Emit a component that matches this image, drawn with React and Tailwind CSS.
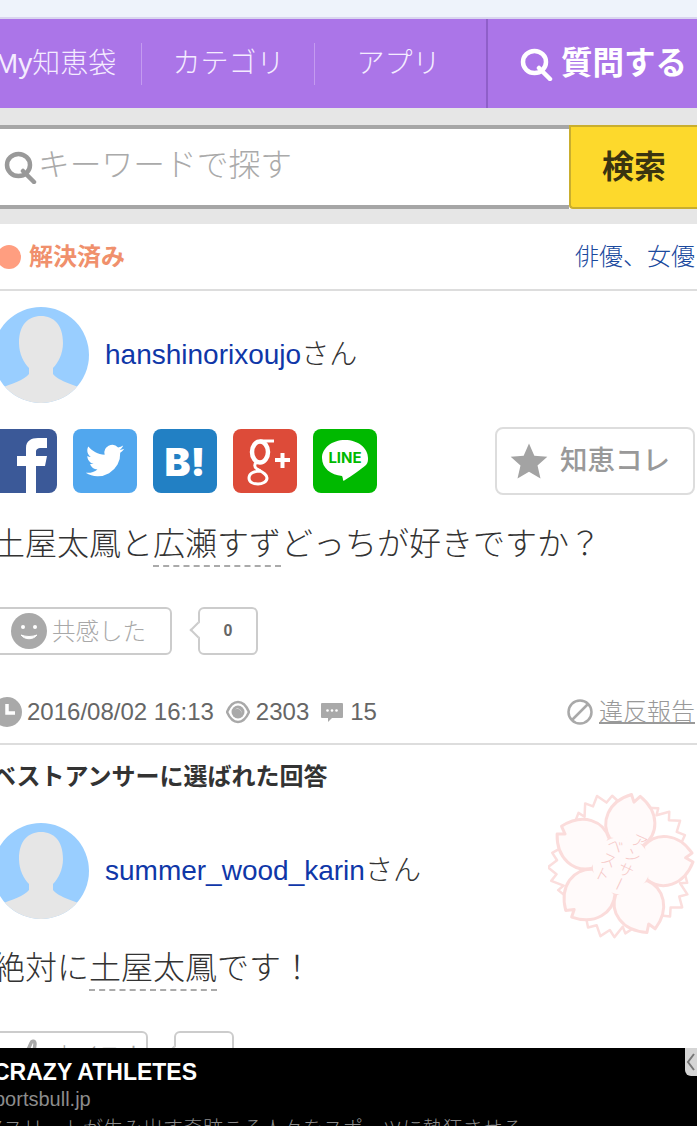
const sans = "font-['Liberation_Sans','Noto_Sans_CJK_JP',sans-serif]";

function SearchGlyph({ className }) {
  return (
    <svg viewBox="0 0 34 34" className={className} fill="none" stroke="currentColor">
      <ellipse cx="14.500" cy="15" rx="11.500" ry="11" strokeWidth="4.500" />
      <path d="M19 21l11 11" strokeWidth="4.500" strokeLinecap="round" />
    </svg>
  );
}

function Avatar() {
  return (
    <svg viewBox="0 0 96 96" className="w-24 h-24 shrink-0 rounded-full">
      <rect width="96" height="96" fill="#99ceff" />
      <path d="M48 9c-13 0-22 9-22 27 0 11 5 20 10 25v6c-5 7-24 12-36 17v12h96V84c-12-5-31-10-36-17v-6c5-5 10-14 10-25 0-18-9-27-22-27z" fill="#e6e6e6" />
    </svg>
  );
}

function Facebook() {
  return (
    <div className="w-16 h-16 rounded-lg bg-[#3b5998] overflow-hidden">
      <svg viewBox="0 0 64 64" className="w-16 h-16">
        <path d="M33 64V37H24V27H33V19C33 12 38 9 45 9H54V19H48C45 19 43 20 43 23V27H54L52 37H43V64Z" fill="#fff" />
      </svg>
    </div>
  );
}

function Twitter() {
  return (
    <div className="w-16 h-16 rounded-lg bg-[#51a7ee] flex items-center justify-center">
      <svg viewBox="0 0 24 24" className="w-[42px] h-[42px]" fill="#fff">
        <path d="M23 5c-.8.4-1.700.6-2.600.7.900-.6 1.600-1.400 2-2.500-.9.5-1.900.9-2.900 1.100a4.500 4.500 0 0 0-7.700 4.100C8 8.200 4.700 6.400 2.500 3.700c-1.200 2-.6 4.600 1.400 6-.7 0-1.400-.2-2-.6 0 2.200 1.500 4.100 3.600 4.500-.7.200-1.400.2-2 .1.600 1.800 2.200 3.100 4.200 3.100A9 9 0 0 1 1 18.700 12.800 12.800 0 0 0 20.700 7.300c.9-.6 1.700-1.400 2.300-2.300z" />
      </svg>
    </div>
  );
}

function Hatena() {
  return (
    <div className="w-16 h-16 rounded-lg bg-[#2280c4] flex items-center justify-center text-white font-black text-[39px] leading-none font-['Inter',sans-serif]">
      B!
    </div>
  );
}

function GooglePlus() {
  return (
    <div className="w-16 h-16 rounded-lg bg-[#dd4b39]">
      <svg viewBox="0 0 64 64" className="w-16 h-16" fill="none" stroke="#fff">
        <ellipse cx="27" cy="23" rx="8" ry="10.500" strokeWidth="4.500" />
        <path d="M27 12h14" strokeWidth="3" />
        <path d="M24 33c-3 2-3 5 0 7 5 3 10 5 10 9 0 4-5 6-9 6-5 0-9-2-9-6 0-5 6-7 12-7" strokeWidth="3" />
        <path d="M42 31h15M49.500 24v15" strokeWidth="4" />
      </svg>
    </div>
  );
}

function Line() {
  return (
    <div className="relative w-16 h-16 rounded-lg bg-[#00b900]">
      <svg viewBox="0 0 64 64" className="w-16 h-16">
        <path d="M32 11c-13 0-23 8-23 18 0 10 9 17 20 18 0 0 1 2 1 4 0 1 1 1 2 0 7-4 16-11 21-15 2-2 2-5 2-7 0-10-10-18-23-18z" fill="#fff" />
      </svg>
      <span className="absolute inset-x-0 top-[20px] text-center text-[#00b900] font-['Inter',sans-serif] font-bold text-[15px] leading-[18px]">LINE</span>
    </div>
  );
}

function Stamp() {
  const front = "M-17 -24C-30 -38 -27 -60 -5 -72L-1 -65L4 -72C27 -60 30 -38 17 -24Z";
  const back = "M-16 -30L-26 -58L-18 -66L-14 -60L-8 -72L-2 -66L6 -74L12 -64L20 -68L26 -54L16 -30Z";
  const angles = [0, 72, 144, 216, 288];
  return (
    <svg viewBox="-74 -74 148 148" className="absolute left-[548px] top-[792px] w-[147px] h-[147px]">
      <g transform="rotate(12)" strokeLinejoin="round">
        <g stroke="#fbdedd" strokeWidth="2.500" fill="#fff">
          {angles.map((a) => <path key={a} d={back} transform={`rotate(${a - 36})`} />)}
        </g>
        <g stroke="#fbdcdb" strokeWidth="3" fill="#fffafa">
          {angles.map((a) => <path key={a} d={front} transform={`rotate(${a})`} />)}
        </g>
        <circle r="29" fill="#fffafa" />
      </g>
      <g fill="#f6c8c7" fontSize="16" transform="rotate(25)" fontFamily="'Noto Sans CJK JP', sans-serif" fontWeight="300">
        <text x="6" y="-38" writingMode="vertical-rl">アンサー</text>
        <text x="-14" y="-24" writingMode="vertical-rl">ベスト</text>
      </g>
    </svg>
  );
}

function Underlined({ children }) {
  return <span className="border-b-2 border-dashed border-[#aaa] pb-[3px]">{children}</span>;
}

function User({ name, className }) {
  return (
    <div className={`flex items-center gap-4 ${className}`}>
      <Avatar />
      <div className="text-[28px] leading-8 font-light text-[#333]">
        <span className="text-[#0f37a8] font-normal">{name}</span>さん
      </div>
    </div>
  );
}

function ActionRow({ icon, label, width, className }) {
  return (
    <div className={`flex items-center ${className}`}>
      <div style={{ width }} className="h-12 border-2 border-[#ccc] rounded-md flex items-center pl-[26px] text-[#a8a8a8] text-[23.5px] font-light">
        {icon}
        <span className="ml-[5px] pt-[3px]">{label}</span>
      </div>
      <div className="relative ml-[26px] w-[60px] h-12 border-2 border-[#ccc] rounded-md bg-white flex items-center justify-center text-[#666] text-[16px] font-bold">
        0
        <span className="absolute left-[-8px] top-[15px] w-3 h-3 rotate-45 bg-white border-l-2 border-b-2 border-[#ccc]" />
      </div>
    </div>
  );
}

function Smile() {
  return (
    <svg viewBox="0 0 36 36" className="w-9 h-9 shrink-0">
      <circle cx="18" cy="18" r="18" fill="#a9a9a9" />
      <circle cx="12" cy="14" r="2" fill="#fff" />
      <circle cx="24" cy="14" r="2" fill="#fff" />
      <path d="M10 22c4 5 12 5 16 0-5 2-11 2-16 0z" fill="#fff" stroke="#fff" />
    </svg>
  );
}

function Thumb() {
  return (
    <svg viewBox="0 0 36 36" className="w-9 h-9 shrink-0" fill="none" stroke="#a9a9a9" strokeWidth="3.500" strokeLinecap="round">
      <path d="M6 26C14 18 18 12 20 6 21 3 24 4 24 7c0 4-1 8-3 12" />
    </svg>
  );
}

export default function App() {
  return (
    <div className={`relative w-[697px] h-[1126px] overflow-hidden bg-white ${sans}`}>
      <div className="h-[17px] bg-[#eef3fb]" />
      <div className="h-[2px] bg-[#d9d5ef]" />

      <nav className="h-[89px] bg-[#ab75e8] flex text-white -ml-[31px] w-[728px]">
        <div className="relative w-[173px] flex items-center justify-center text-[28px] font-light text-[#f4ecff]">
          My知恵袋
          <span className="absolute right-0 top-[24px] h-[42px] w-[1px] bg-[#c49bf0]" />
        </div>
        <div className="relative w-[173px] flex items-center justify-center text-[28px] font-light text-[#f4ecff]">
          カテゴリ
          <span className="absolute right-0 top-[24px] h-[42px] w-[1px] bg-[#c49bf0]" />
        </div>
        <div className="w-[171px] flex items-center justify-center pr-[4px] text-[28px] font-light text-[#f4ecff]">
          アプリ
        </div>
        <div className="flex-1 border-l-2 border-[#8f5fc9] flex items-center pl-[32px] gap-[7px] text-[31.5px] font-bold">
          <SearchGlyph className="w-[34px] h-[34px] text-white" />
          <span>質問する</span>
        </div>
      </nav>

      <div className="h-[17px] bg-[#e6e6e6]" />
      <div className="h-[84px] flex">
        <div className="flex-1 border-y-4 border-[#a6a6a6] bg-white flex items-center pl-[4px] text-[31.75px] font-light text-[#aaa]">
          <SearchGlyph className="w-[34px] h-[34px] text-[#999]" />
          <span className="-mt-[2px]">キーワードで探す</span>
        </div>
        <div className="w-[128px] bg-[#fdd92c] border-2 border-[#c9ae2e] border-r-0 rounded-bl-sm flex items-center justify-center text-[32px] font-bold text-[#3a3410]">
          検索
        </div>
      </div>
      <div className="h-[15px] bg-[#e6e6e6]" />

      <div className="h-[65px] flex items-center justify-between pr-[2px]">
        <div className="flex items-center -ml-[3px] gap-[8px] text-[#f0906c] text-[24px] font-bold">
          <span className="w-6 h-6 rounded-full bg-[#ff9e80]" />
          解決済み
        </div>
        <span className="text-[#1b4a9e] text-[24px] font-light">俳優、女優</span>
      </div>
      <div className="h-[2px] bg-[#ddd]" />

      <div className="-ml-[8px] w-[705px]">
        <User name="hanshinorixoujo" className="mt-[16px] pl-[1px]" />

        <div className="mt-[24px] h-[68px] flex items-center pl-[1px] pr-[2px]">
          <div className="flex gap-4">
            <Facebook />
            <Twitter />
            <Hatena />
            <GooglePlus />
            <Line />
          </div>
          <div className="ml-auto w-[200px] h-[68px] border-2 border-[#ddd] rounded-lg flex items-center pl-[12px] gap-[11px] text-[#999] text-[27.5px] font-medium">
            <svg viewBox="0 0 24 24" className="w-[40px] h-[40px]" fill="#a3a3a3">
              <path d="M12 1.500l3.200 7.300 7.800.7-5.900 5.200 1.800 7.800L12 18.400l-6.900 4.100 1.800-7.800L1 9.500l7.800-.7z" />
            </svg>
            知恵コレ
          </div>
        </div>

        <p className="mt-[25px] pl-[1px] text-[32px] leading-[48px] font-light text-[#333]">
          土屋太鳳と<Underlined>広瀬すず</Underlined>どっちが好きですか？
        </p>

        <ActionRow className="mt-[39px] -ml-[9px]" width="189px" icon={<Smile />} label="共感した" />

        <div className="mt-[41px] h-[32px] flex items-center text-[24px] text-[#666] font-light">
          <svg viewBox="0 0 30 30" className="w-[30px] h-[30px] mr-[5px]">
            <circle cx="15" cy="15" r="15" fill="#a9a9a9" />
            <path d="M15 7v9h8" stroke="#fff" strokeWidth="3.500" fill="none" />
          </svg>
          <span>2016/08/02 16:13</span>
          <svg viewBox="0 0 24 24" className="w-6 h-6 ml-[12px] mr-[6px]">
            <path d="M1 12C4 5 8 2 12 2s8 3 11 10c-3 7-7 10-11 10S4 19 1 12z" fill="none" stroke="#a9a9a9" strokeWidth="2.500" />
            <circle cx="12" cy="12" r="6.500" fill="#a9a9a9" />
            <path d="M9 9.500a4 4 0 0 1 6 5c1-2 0-5-3-5.500-1 0-2 0-3 .5z" fill="#fff" />
          </svg>
          <span>2303</span>
          <svg viewBox="0 0 24 24" className="w-6 h-6 ml-[11px] mr-[6px]">
            <path d="M2 3h20a1 1 0 0 1 1 1v13a1 1 0 0 1-1 1H12l-4 4v-4H2a1 1 0 0 1-1-1V4a1 1 0 0 1 1-1z" fill="#a9a9a9" />
            <circle cx="7.500" cy="10.500" r="1.300" fill="#fff" />
            <circle cx="12" cy="10.500" r="1.300" fill="#fff" />
            <circle cx="16.500" cy="10.500" r="1.300" fill="#fff" />
          </svg>
          <span>15</span>
          <div className="ml-auto mr-[2px] flex items-center gap-[6px] text-[#999]">
            <svg viewBox="0 0 26 26" className="w-[26px] h-[26px]" fill="none" stroke="#a9a9a9" strokeWidth="2.500">
              <circle cx="13" cy="13" r="11.500" />
              <path d="M5 21L21 5" />
            </svg>
            <span className="underline underline-offset-2">違反報告</span>
          </div>
        </div>

        <div className="mt-[15px] h-[2px] bg-[#ddd] ml-[8px]" />

        <h2 className="mt-[16px] text-[24px] leading-8 font-bold text-[#333]">ベストアンサーに選ばれた回答</h2>

        <User name="summer_wood_karin" className="mt-[30px] pl-[1px]" />

        <p className="mt-[25px] pl-[1px] text-[32px] leading-[48px] font-light text-[#333]">
          絶対に<Underlined>土屋太鳳</Underlined>です！
        </p>

        <ActionRow className="mt-[39px] -ml-[9px]" width="165px" icon={<Thumb />} label="ナイス！" />
      </div>

      <Stamp />

      <div className="absolute left-0 right-0 top-[1048px] h-[78px] bg-black overflow-hidden">
        <div className="-ml-[7px] mt-[9px] text-white text-[23px] leading-[30px] font-bold whitespace-nowrap">CRAZY ATHLETES</div>
        <div className="-ml-[16px] text-[#8c8c8c] text-[20px] leading-[24px] whitespace-nowrap">sportsbull.jp</div>
        <div className="-ml-[17px] mt-[5px] text-[#8c8c8c] text-[20px] leading-[26px] font-light whitespace-nowrap">アスリートが生み出す奇跡こそ人々をスポーツに熱狂させる</div>
        <div className="absolute right-0 top-0 w-[12px] h-[28px] bg-[#d5d5d5] rounded-bl-md flex items-center justify-center">
          <svg viewBox="0 0 12 28" className="w-3 h-7" fill="none" stroke="#777" strokeWidth="2">
            <path d="M9 6L3 14l6 8" />
          </svg>
        </div>
      </div>
    </div>
  );
}
